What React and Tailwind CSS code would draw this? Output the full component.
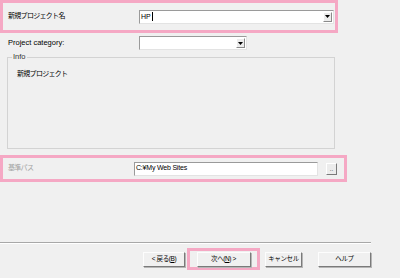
import React from 'react';

// Flecha pequeña del combo
function Arrow() {
    return (
        <svg width="5" height="3" viewBox="0 0 5 3">
            <path d="M0 0H5L2.5 3Z" fill="#000" />
        </svg>
    );
}

function Combo({ className, children }) {
    return (
        <div className={`flex h-[14px] items-stretch border border-t-[#9a9a9a] border-l-[#9a9a9a] border-r-[#e3e3e3] border-b-[#e3e3e3] bg-white ${className}`}>
            <div className="flex flex-1 items-center pl-[1px] leading-none">{children}</div>
            <div className="m-[1px] flex w-[9px] items-center justify-center border border-t-white border-l-white border-r-[#8a8a8a] border-b-[#8a8a8a] bg-[#ececec]">
                <Arrow />
            </div>
        </div>
    );
}

function Button({ className, children }) {
    return (
        <div className={`flex h-[15px] items-center justify-center border border-t-[#fdfdfd] border-l-[#fdfdfd] border-r-[#7a7a7a] border-b-[#7a7a7a] bg-[#f0f0f0] text-[6.5px] tracking-[-0.4px] shadow-[1px_1px_0_#b5b5b5] ${className}`}>
            {children}
        </div>
    );
}

export default function App() {
    return (
        <div className="flex h-[278px] w-[400px] flex-col overflow-hidden bg-[#f0f0f0] font-['Liberation_Sans','Noto_Sans_CJK_JP',sans-serif] text-[7.5px] text-black">
            {/* Nombre del proyecto */}
            <div className="flex h-[33px] w-[338px] items-center border-[3px] border-[#f5a8c4]">
                <span className="w-[136px] pl-[5px] text-[7px] tracking-[-0.7px]">新規プロジェクト名</span>
                <Combo className="w-[195px]">
                    <span className="text-[7px]">HP</span>
                    <span className="ml-[1px] h-[9px] w-px bg-black" />
                </Combo>
            </div>

            <div className="mt-[3px] flex h-[14px] items-center">
                <span className="w-[139px] pl-[8px]">Project category:</span>
                <Combo className="w-[108px]" />
            </div>

            <fieldset className="ml-[7px] mt-[3px] h-[96px] w-[328px] border border-[#d3d3d3]">
                <legend className="ml-[4px] px-[1px] leading-[8px] text-[#333]">Info</legend>
                <div className="mt-[8px] pl-[9px] text-[7px] leading-[9px] tracking-[-0.7px]">新規プロジェクト</div>
            </fieldset>

            {/* Ruta base */}
            <div className="mt-[6px] flex h-[27px] w-[347px] items-center border-[3px] border-[#f5a8c4]">
                <span className="w-[131px] pl-[5px] text-[7px] tracking-[-0.7px] text-[#a3a3a3]">基準パス</span>
                <div className="flex h-[14px] w-[184px] items-center border border-t-[#9a9a9a] border-l-[#9a9a9a] border-r-[#e3e3e3] border-b-[#e3e3e3] bg-white pl-[1px] text-[7px] tracking-[-0.2px]">
                    C:¥My Web Sites
                </div>
                <div className="ml-[8px] flex h-[12px] w-[11px] items-center justify-center border border-t-white border-l-white border-r-[#7a7a7a] border-b-[#7a7a7a] bg-[#ececec] text-[6px] leading-none">
                    ..
                </div>
            </div>

            <div className="mt-[60px] w-[371px] border-t border-b border-t-[#a8a8a8] border-b-white" />

            {/* Botones */}
            <div className="mt-[4px] flex items-center">
                <Button className="ml-[143px] w-[42px]">
                    &lt; 戻る(<span className="underline">B</span>)
                </Button>
                <div className="ml-[2px] flex h-[22px] w-[73px] items-center justify-center border-[3px] border-[#f5a8c4]">
                    <Button className="w-[54px] border-[#555] border-t-[#555] border-l-[#555]">
                        次へ(<span className="underline">N</span>) &gt;
                    </Button>
                </div>
                <Button className="ml-[5px] w-[37px]">キャンセル</Button>
                <Button className="ml-[16px] w-[53px]">ヘルプ</Button>
            </div>
        </div>
    );
}
